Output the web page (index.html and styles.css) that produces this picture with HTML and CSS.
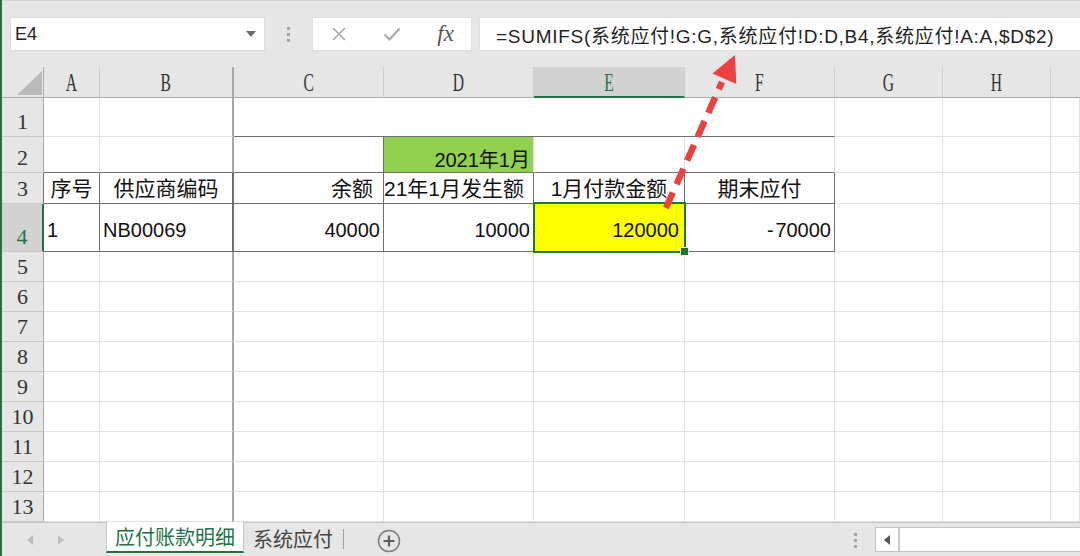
FILE: index.html
```html
<!DOCTYPE html>
<html lang="zh">
<head>
<meta charset="utf-8">
<title>Excel</title>
<link rel="stylesheet" href="styles.css">
</head>
<body>
<div class="app">
  <div class="fbar">
    <div class="namebox"><span>E4</span><span class="caret"></span></div>
    <div class="grip"><i></i><i></i><i></i></div>
    <div class="btns">
      <span class="btn"><svg width="16" height="16" viewBox="0 0 16 16"><path d="M2 2L14 14M14 2L2 14" stroke="#a8a8a8" stroke-width="1.6" fill="none"/></svg></span>
      <span class="btn"><svg width="18" height="14" viewBox="0 0 18 14"><path d="M1.5 7.5L6.5 12.5L16.5 1.5" stroke="#a8a8a8" stroke-width="2" fill="none"/></svg></span>
      <span class="btn fx">fx</span>
    </div>
    <div class="formula">=SUMIFS(系统应付!G:G,系统应付!D:D,B4,系统应付!A:A,$D$2)</div>
  </div>

  <div class="sheet">
    <!-- header -->
    <div class="h corner"><svg width="25" height="24" viewBox="0 0 25 24"><polygon points="25,0 25,24 0,24" fill="#b9b9b9"/></svg></div>
    <div class="h"><span class="lt">A</span></div>
    <div class="h fz"><span class="lt">B</span></div>
    <div class="h"><span class="lt">C</span></div>
    <div class="h"><span class="lt">D</span></div>
    <div class="h hsel"><span class="lt">E</span></div>
    <div class="h"><span class="lt">F</span></div>
    <div class="h"><span class="lt">G</span></div>
    <div class="h"><span class="lt">H</span></div>
    <div class="h hlast"></div>

    <!-- row 1 -->
    <div class="r">1</div>
    <div class="c"></div>
    <div class="c fz"></div>
    <div class="c span4 bb"></div>
    <div class="c"></div><div class="c"></div><div class="c"></div>

    <!-- row 2 -->
    <div class="r">2</div>
    <div class="c bb"></div>
    <div class="c fz bb"></div>
    <div class="c bb br"></div>
    <div class="c bb green R bottom">2021年1月</div>
    <div class="c bb"></div>
    <div class="c bb"></div>
    <div class="c"></div><div class="c"></div><div class="c"></div>

    <!-- row 3 -->
    <div class="r rdark">3</div>
    <div class="c bb br C cj">序号</div>
    <div class="c fz fzd bb C cj">供应商编码</div>
    <div class="c bb br R cj pr10">余额</div>
    <div class="c bb br R cj pr9 clip"><span class="clipped">2021年1月发生额</span></div>
    <div class="c bb br C cj">1月付款金额</div>
    <div class="c bb br C cj">期末应付</div>
    <div class="c"></div><div class="c"></div><div class="c"></div>

    <!-- row 4 -->
    <div class="r rsel">4</div>
    <div class="c bb br L mid">1</div>
    <div class="c fz fzd bb L mid">NB00069</div>
    <div class="c bb br R mid">40000</div>
    <div class="c bb br R mid">10000</div>
    <div class="c bb br R mid yellow sel">120000</div>
    <div class="c bb br R mid">-&#8202;70000</div>
    <div class="c"></div><div class="c"></div><div class="c"></div>

    <!-- rows 5-13 -->
    <div class="r">5</div><div class="c"></div><div class="c fz"></div><div class="c"></div><div class="c"></div><div class="c"></div><div class="c"></div><div class="c"></div><div class="c"></div><div class="c"></div>
    <div class="r">6</div><div class="c"></div><div class="c fz"></div><div class="c"></div><div class="c"></div><div class="c"></div><div class="c"></div><div class="c"></div><div class="c"></div><div class="c"></div>
    <div class="r">7</div><div class="c"></div><div class="c fz"></div><div class="c"></div><div class="c"></div><div class="c"></div><div class="c"></div><div class="c"></div><div class="c"></div><div class="c"></div>
    <div class="r">8</div><div class="c"></div><div class="c fz"></div><div class="c"></div><div class="c"></div><div class="c"></div><div class="c"></div><div class="c"></div><div class="c"></div><div class="c"></div>
    <div class="r">9</div><div class="c"></div><div class="c fz"></div><div class="c"></div><div class="c"></div><div class="c"></div><div class="c"></div><div class="c"></div><div class="c"></div><div class="c"></div>
    <div class="r">10</div><div class="c"></div><div class="c fz"></div><div class="c"></div><div class="c"></div><div class="c"></div><div class="c"></div><div class="c"></div><div class="c"></div><div class="c"></div>
    <div class="r">11</div><div class="c"></div><div class="c fz"></div><div class="c"></div><div class="c"></div><div class="c"></div><div class="c"></div><div class="c"></div><div class="c"></div><div class="c"></div>
    <div class="r">12</div><div class="c"></div><div class="c fz"></div><div class="c"></div><div class="c"></div><div class="c"></div><div class="c"></div><div class="c"></div><div class="c"></div><div class="c"></div>
    <div class="r">13</div><div class="c"></div><div class="c fz"></div><div class="c"></div><div class="c"></div><div class="c"></div><div class="c"></div><div class="c"></div><div class="c"></div><div class="c"></div>
  </div>

  <div class="tabbar">
    <div class="nav">
      <span class="tri-l"></span>
      <span class="tri-r"></span>
    </div>
    <div class="tab active">应付账款明细</div>
    <div class="tab other">系统应付</div>
    <div class="sep"></div>
    <div class="plus"><svg width="24" height="24" viewBox="0 0 24 24"><circle cx="12" cy="12" r="10.5" stroke="#7b7b7b" stroke-width="1.5" fill="none"/><path d="M12 6.5V17.5M6.5 12H17.5" stroke="#5e5e5e" stroke-width="2.2"/></svg></div>
    <div class="spacer"></div>
    <div class="grip2"><i></i><i></i><i></i></div>
    <div class="scroll">
      <div class="sbtn"><span class="tri-dark"></span></div>
      <div class="track"></div>
    </div>
  </div>

  <svg class="arrow" width="1080" height="556" viewBox="0 0 1080 556">
    <line x1="666" y1="208" x2="722" y2="82" stroke="#ec4141" stroke-width="6.5" stroke-dasharray="17 9"/>
    <polygon points="735,55 712.5,73.4 736.3,84" fill="#ec4141"/>
  </svg>
</div>
</body>
</html>
```

FILE: styles.css
```css
* { box-sizing: border-box; }
html, body { margin: 0; padding: 0; }
body {
  width: 1080px;
  height: 556px;
  overflow: hidden;
  background: #e6e6e6;
  font-family: "Liberation Sans", "Noto Sans CJK SC", sans-serif;
}
.app {
  position: relative;
  width: 1080px;
  height: 556px;
  border-left: 2px solid #217346;
  display: flex;
  flex-direction: column;
  background: #e6e6e6;
  overflow: hidden;
}

/* formula bar */
.fbar {
  height: 67px;
  flex: none;
  display: flex;
  align-items: flex-start;
  padding: 16px 0 0 8px;
  border-top: 1px solid #d6d6d6;
}
.namebox {
  width: 255px;
  height: 34px;
  background: #fff;
  border: 1px solid #dcdcdc;
  display: flex;
  align-items: center;
  justify-content: space-between;
  padding: 0 8px 0 4px;
  font-size: 18px;
  color: #222;
}
.caret {
  width: 0; height: 0;
  border-left: 5px solid transparent;
  border-right: 5px solid transparent;
  border-top: 6px solid #6d6d6d;
}
.grip {
  width: 47px;
  height: 34px;
  display: flex;
  flex-direction: column;
  align-items: center;
  gap: 3px;
  padding-top: 10px;
}
.grip i, .grip2 i {
  display: block;
  width: 3px;
  height: 3px;
  background: #a3a3a3;
}
.btns {
  width: 160px;
  height: 34px;
  background: #fff;
  border: 1px solid #e0e0e0;
  display: flex;
  align-items: center;
}
.btn {
  width: 53px;
  display: flex;
  justify-content: center;
  align-items: center;
}
.fx {
  font-family: "Liberation Serif", serif;
  font-style: italic;
  font-size: 23px;
  color: #555;
  padding-left: 2px;
}
.formula {
  margin-left: 7px;
  flex: 1;
  height: 34px;
  background: #fff;
  border: 1px solid #e0e0e0;
  border-right: none;
  padding-left: 16px;
  display: flex;
  align-items: center;
  font-size: 19px;
  letter-spacing: 0.72px;
  white-space: nowrap;
  overflow: hidden;
  color: #1f1f1f;
}

/* sheet grid */
.sheet {
  flex: none;
  display: grid;
  grid-template-columns: 42px 56px 134px 150px 150px 151px 150px 108px 108px 1fr;
  grid-template-rows: 31px 39px 36px 31px 48px repeat(9, 30px);
  background: #fff;
}
.h {
  background: #e6e6e6;
  border-right: 1px solid #cdcdcd;
  border-bottom: 1px solid #ababab;
  display: flex;
  align-items: center;
  justify-content: center;
  color: #333;
}
.hlast { border-right: none; }
.corner {
  justify-content: flex-end;
  align-items: flex-end;
  padding: 0 1px 2px 0;
  border-right-color: #ababab;
}
.corner svg { display: block; }
.lt {
  display: inline-block;
  font-family: "Liberation Serif", serif;
  font-size: 26px;
  line-height: 1;
  transform: scaleX(0.6);
  margin-top: 2px;
}
.hsel {
  background: #d2d2d2;
  color: #217346;
  border-bottom: 2px solid #217346;
}
.r {
  background: #e6e6e6;
  border-right: 1px solid #ababab;
  border-bottom: 1px solid #c9c9c9;
  display: flex;
  align-items: flex-end;
  justify-content: center;
  font-family: "Liberation Serif", serif;
  font-size: 22px;
  line-height: 1.1;
  padding-bottom: 2px;
  color: #333;
}
.rdark { border-right-color: #707070; }
.rsel {
  background: #d2d2d2;
  color: #217346;
  border-right: 2px solid #217346;
}

.c {
  border-right: 1px solid #e1e1e1;
  border-bottom: 1px solid #e1e1e1;
  display: flex;
  align-items: center;
  white-space: nowrap;
  font-size: 20px;
  line-height: 1.1;
  color: #111;
  padding: 0 3px;
  min-width: 0;
}
.span4 { grid-column: span 4; }
.fz { border-right: 2px solid #a6a6a6; }
.fzd { border-right-color: #6e6e6e; }
.bb { border-bottom-color: #707070; }
.br { border-right-color: #707070; }
.L { justify-content: flex-start; padding-left: 3px; }
.R { justify-content: flex-end; }
.C { justify-content: center; }
.cj { font-size: 21px; line-height: 1; }
.pr10 { padding-right: 10px; }
.pr9 { padding-right: 9px; }
.clip { overflow: hidden; }
.clipped { flex: none; }
.bottom { align-items: flex-end; padding-bottom: 1px; }
.mid { padding-top: 4px; }
.green { background: #92d050; }
.yellow { background: #ffff00; }
.sel { position: relative; padding-right: 5px; }
.sel::before {
  content: "";
  position: absolute;
  top: -2px; left: -1px; right: -2px; bottom: -2px;
  border: 2px solid #217346;
  z-index: 2;
}
.sel::after {
  content: "";
  position: absolute;
  right: -5px; bottom: -5px;
  width: 7px; height: 7px;
  background: #217346;
  border: 1px solid #fff;
  z-index: 3;
}

/* sheet tabs */
.tabbar {
  flex: 1;
  display: flex;
  align-items: flex-start;
  border-top: 1px solid #c6c6c6;
  background: #e6e6e6;
}
.nav {
  width: 104px;
  height: 33px;
  display: flex;
  align-items: center;
  padding-left: 25px;
  gap: 25px;
}
.tri-l, .tri-r {
  width: 0; height: 0;
  border-top: 5px solid transparent;
  border-bottom: 5px solid transparent;
}
.tri-l { border-right: 6px solid #bdbdbd; }
.tri-r { border-left: 6px solid #bdbdbd; }
.tab {
  height: 30px;
  display: flex;
  align-items: center;
  font-size: 20px;
  white-space: nowrap;
}
.active {
  width: 138px;
  justify-content: center;
  background: #fff;
  color: #217346;
  border-left: 1px solid #c6c6c6;
  border-right: 1px solid #c6c6c6;
  border-bottom: 2px solid #217346;
  margin-top: -1px;
  height: 31px;
}
.other {
  width: 99px;
  padding-left: 9px;
  color: #444;
}
.sep {
  width: 1px;
  height: 20px;
  margin-top: 6px;
  background: #a0a0a0;
}
.plus {
  margin-left: 33px;
  margin-top: 6px;
  width: 24px;
  height: 24px;
}
.plus svg { display: block; }
.spacer { flex: 1; }
.grip2 {
  width: 12px;
  margin-right: 14px;
  margin-top: 10px;
  display: flex;
  flex-direction: column;
  align-items: center;
  gap: 3px;
}
.scroll {
  width: 205px;
  height: 25px;
  margin-top: 4px;
  display: flex;
  border: 1px solid #c3c3c3;
  border-right: none;
  background: #fff;
}
.sbtn {
  width: 24px;
  border-right: 2px solid #c9c9c9;
  display: flex;
  align-items: center;
  justify-content: center;
}
.tri-dark {
  width: 0; height: 0;
  border-top: 5px solid transparent;
  border-bottom: 5px solid transparent;
  border-right: 6px solid #555;
}
.track { flex: 1; }

/* annotation arrow overlay */
.arrow {
  position: absolute;
  left: -2px;
  top: 0;
  pointer-events: none;
  z-index: 10;
}
```
